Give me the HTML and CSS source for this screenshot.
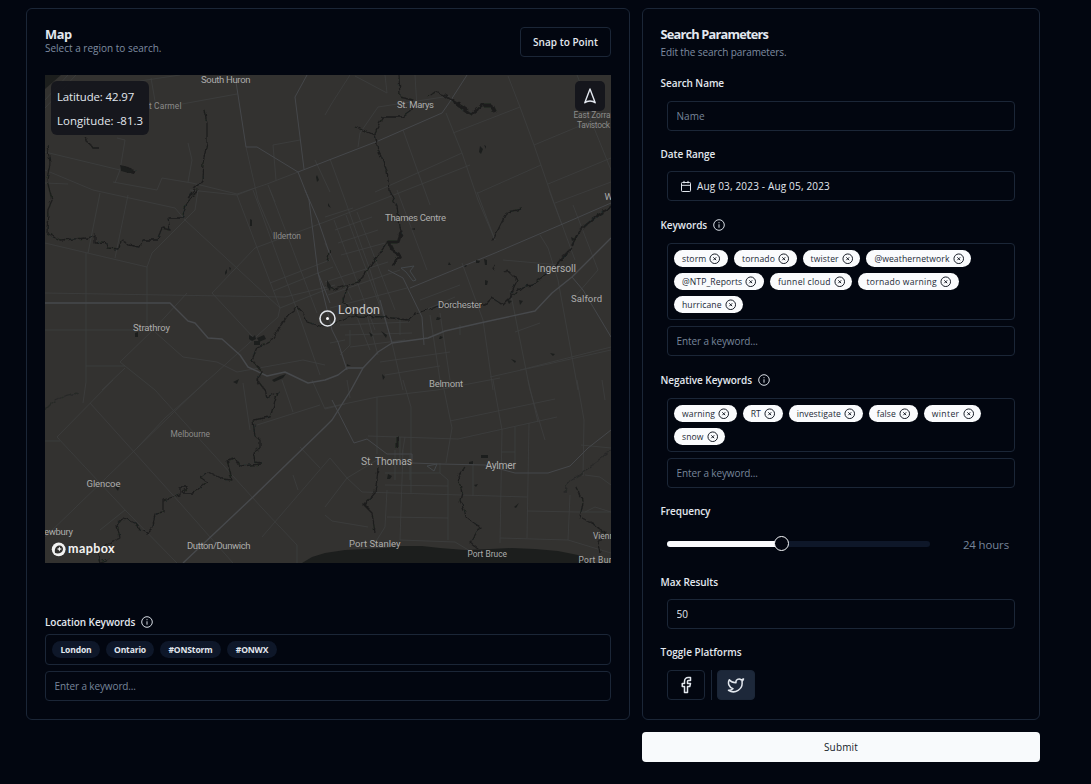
FILE: index.html
```html
<!DOCTYPE html>
<html lang="en">
<head>
<meta charset="utf-8">
<title>Search</title>
<link rel="stylesheet" href="styles.css">
</head>
<body>
<svg class="defs" width="0" height="0" aria-hidden="true">
  <symbol id="i-info" viewBox="0 0 12 12"><circle cx="6" cy="6" r="5.3"/><path d="M6 5.3v3.4M6 3.2v1"/></symbol>
  <symbol id="i-x" viewBox="0 0 24 24"><circle cx="12" cy="12" r="10"/><path d="m15 9-6 6M9 9l6 6"/></symbol>
</svg>
<main class="page">
  <section class="card map-card">
    <header class="map-head">
      <div>
        <h2 class="title title-map">Map</h2>
        <p class="desc">Select a region to search.</p>
      </div>
      <button class="btn snap">Snap to Point</button>
    </header>
    <div class="map">
      <svg class="map-svg" viewBox="45 75 566 488" width="566" height="488">
        <defs>
          <filter id="wiggle" x="-5%" y="-5%" width="110%" height="110%">
            <feTurbulence type="fractalNoise" baseFrequency="0.2" numOctaves="1" seed="4"/>
            <feDisplacementMap in="SourceGraphic" scale="5" xChannelSelector="R" yChannelSelector="G"/>
          </filter>
        </defs>
        <path class="water" d="M45 75H61L45 89Z"/>
        <path class="water" d="M302 563L312 557 325 553 345 550 365 549 385 548 400 546 422 546 440 548 465 550 490 549 512 548 535 549 558 551 578 555 590 563Z"/>
        <g class="road minor">
          <path d="M45 108L76 75M45 100L68 75M151 78L155 101M140 81L180 75M182 104L237 94M45 152L120 170M125 140L120 170 115 183M45 183L68 184M113 182L157 190 162 178 192 183 237 194 267 184 298 172M246 147L258 200 275 240M188 143L192 160 188 182M273 145L300 140M273 145L276 180M125 140L117 138"/>
          <path d="M268 185L275 202M100 193L88 253M128 195L115 258M45 170L93 190 175 208 185 220 280 308 278 317 197 390M45 243L147 267 152 253 195 210 198 190M86 253L86 382 83 403M147 267V325M45 293L285 297 335 285M45 330H140M187 293L155 328 120 362 155 390 262 508 297 545V563M155 332L183 357 217 362 237 372 303 360 325 365M86 366H125M102 390L125 368"/>
          <path d="M255 248L212 293 253 337M255 248L330 220 470 165M237 195L280 308M253 190L300 318 320 375M270 190L317 313M190 190L237 195 255 188M270 283L330 260M273 291L333 267M280 308L330 288M197 390L165 418 137 448 45 537M207 380L137 448M57 437L127 512 177 563M90 403L180 503 233 563M57 437L113 380M45 441H60M243 383L250 430M257 425L320 405M282 380L293 412M100 530L125 510M330 458L262 537M300 447L320 468M312 380L325 409 345 404M293 475L298 490"/>
          <path d="M350 75L332 103 325 115M355 76L387 93 385 75M415 75L417 108M378 107L360 133 358 147M378 107L450 96M508 76L520 107 534 145 553 200 575 260M446 113L462 153 478 200 495 240M453 133L520 107M403 130L418 172 430 205M375 192L462 153M478 193L541 165M534 145L611 113M548 184L611 158M588 113L611 170M577 75L585 95M330 159L345 200 370 270 392 343 403 390M397 190L427 270M477 192L495 240M462 263L483 320 493 390M510 290L530 390 545 440M549 190L562 225M558 280L578 390M540 235L548 248 558 280M555 203L611 182M503 260L560 265M325 217L353 208M330 192L315 160M573 205L598 270 572 300"/>
          <path d="M334 220L375 330M346 215L385 320M357 212L395 310M325 243L352 300M325 282L388 262M328 295L400 270M330 308L407 288M335 230L372 217M338 243L378 230M341 255L385 243M420 300L460 285M425 310L455 297M340 325L410 322M345 335L412 333M350 347L405 340M380 362L450 352M385 375L440 366M357 317L370 350M367 315L378 355M400 320V335M330 343L345 340M340 355L350 345V330M347 370L340 350M430 315L440 380M440 313L450 380M460 325V335M490 377L611 350M515 332L540 323M520 370L611 347"/>
          <path d="M325 408L377 397 437 390 500 378M377 397V454M403 380L411 407V493M442 380L452 428 446 463M493 380L502 430 500 543M528 380L538 422M577 380L584 420 583 476M450 421L555 399M368 436L458 439 557 417M515 427V470M529 423L527 538M502 452H515M325 507L347 478 377 460M330 458L347 478 362 492 527 497M385 485L448 486M448 480V540M387 517L448 518M403 450L400 540 455 542 470 551M387 490L385 527 375 543M473 463V496M527 511L578 512 611 512M570 495L568 540 611 553M500 538L568 540M440 463V473L448 480M385 473H440M325 515L332 521 368 527M395 450V480M400 437V460M405 437L402 455M585 475L600 477 611 485M585 512L595 507 611 512M581 445L611 448M347 380L350 398M602 380L605 400M410 455V480M385 460L412 462"/>
        </g>
        <g class="road mid">
          <path d="M236 82L246 147 257 147 298 172 309 200 318 273 332 330 338 342 347 370"/>
          <path d="M307 75L295 97 304 169M298 172L378 141 442 113 449 103 467 75"/>
          <path d="M305 190L318 220 330 255M318 273L330 303M611 203L572 220 495 253 410 288M388 270L403 278 422 317 424 345M380 300L392 343M572 277L583 290 611 337"/>
          <path d="M332 400L354 443 367 439 387 454H412V463L440 464 485 465 515 473H548L570 466 588 448 611 430"/>
        </g>
        <g class="road major">
          <path d="M45 303H170L188 321 195 323 208 338 222 339 240 355 248 367 267 376 285 372 308 383 325 380 338 375 347 368H363"/>
          <path d="M611 238L572 277 552 293 535 311 480 323 445 331 428 338 392 343 378 352 363 368 351 390 332 420 325 427 253 497 183 563"/>
        </g>
        <path class="town" d="M401 268L414 266 410 271 416 280 413 281 406 272ZM427 466L437 464 434 471Z"/>
        <g class="river" filter="url(#wiggle)">
          <path d="M47 145L50 163 47 180 52 200 48 210 47 233 60 240 87 238 95 235 95 243 105 242 107 248 118 249 122 240 128 245 140 247 143 240 157 240 162 228 170 230 168 218 182 218 187 203 198 190 188 197M188 197L202 180 203 163 207 143 207 123 204 110M85 138L93 148H100"/>
          <path d="M399 75L400 97 412 100V110L403 117H382L375 133 378 150 387 170 389 190 397 207 401 233M355 127L375 135M388 242L368 269 358 282 342 287 333 290 325 285M348 287L343 300 349 310 358 316 385 317 408 320 413 315 435 307 460 304 485 305 492 298 503 305 508 300 522 287 532 285 555 267 572 248"/>
          <path d="M357 315L323 327 307 322 303 313 298 307 288 315 278 330 270 342 257 347 252 360 262 372 257 380 265 390 267 397 278 392 270 417 253 420 255 437 260 440V448L253 452 255 462 262 463M262 464L240 466 235 458 227 460 232 480 222 479 208 472 200 477 207 482 193 493 182 493 187 487 180 487V495L163 500V512L155 513 153 527 147 533 140 530 135 523 123 518 117 525 120 538 110 543 97 550 100 563"/>
          <path d="M505 273L507 270 517 280 510 298M495 265L493 270M493 240L507 212 522 209M378 467L377 480 375 493 364 505 372 513 375 533M465 467L458 477 462 493 460 500 467 518 480 527 470 543 478 549M576 487L583 503 580 517 592 523 605 533 598 543 600 553M330 250L327 262M98 563L110 558"/>
          <path d="M428 97L435 92 444 95 453 101"/>
          <path class="faint" d="M611 450L580 475 567 483 565 493M45 410L55 400 68 395 78 393"/>
        </g>
        <g class="river thick" filter="url(#wiggle)">
          <path d="M452 100L472 114 482 105H492L496 113"/>
          <path d="M401 233L398 242 388 242 392 250 400 255 393 265"/>
          <path d="M122 168L135 172M397 437V447"/>
        </g>
        <g class="river medium" filter="url(#wiggle)">
          <path d="M611 207L598 215 586 225 578 233 572 246M570 250L560 260"/>
        </g>
        <path class="pond" d="M249 335l4 2 2-2 1 4-4 2-3-2zM257 338l7-3 2 4-7 3zM254 341h6v4h-6zM135 333l3-1v5h-3zM115 487l5-2-2 6zM250 219l2 1v6h-2zM225 272l2-3v4l-2 2zM229 267l2 1-1 3zM480 146l3 3-2 5-2-2zM484 145l2 1v3zM484 259l3 1v5h-2zM476 260l4 1-1 2h-3zM485 280l3 1-1 4h-2zM437 317l4 1-2 2h-3zM440 336l3 1-2 2h-2zM369 332l4 3-2 2zM381 331l6 4-1 3zM511 359l5 2-1 2zM550 353l5 1-2 2zM347 364l4 2h-4zM382 374l3 3-2 3zM411 229l4-1v2zM449 262l2 3h-3zM463 266l4-1-1 2zM520 343l3-2zM571 237l4 2-3 2zM481 455h7v3h-7zM469 462l4-1v3h-4zM474 485l4-1-2 3zM514 507l5-4-3 5zM388 474l4 2-2 3h-3zM402 490l2 3zM316 177l1-2 2 5-2 2zM120 165l4 1 5 3 5 1-4 3-9-2zM233 382l6-3-2 5zM272 380l8-4 6-2-3 4-9 4zM507 300l5 1-3 3zM519 300l4 1-3 4zM328 203l3 5-3-2zM327 280l4 6-1 5-3-5z"/>
        <g class="labels">
          <text x="201" y="83" textLength="49.500" class="l9">South Huron</text>
          <text x="149" y="109" textLength="32.500" class="l8 dim">t Carmel</text>
          <text x="397" y="108" textLength="37" class="l9">St. Marys</text>
          <text x="573.500" y="118" textLength="37" class="l8 dim">East Zorra</text>
          <text x="577" y="127.500" textLength="33" class="l8 dim">Tavistock</text>
          <text x="604.500" y="200" class="l9">W</text>
          <text x="385" y="221" textLength="61" class="l9">Thames Centre</text>
          <text x="273" y="239" textLength="28" class="l8 dim">Ilderton</text>
          <text x="537" y="272" textLength="39" class="l10">Ingersoll</text>
          <text x="571" y="302" textLength="31" class="l9">Salford</text>
          <text x="438" y="308" textLength="44" class="l9">Dorchester</text>
          <text x="338" y="313.500" textLength="42" class="l12">London</text>
          <text x="133" y="331" textLength="37" class="l9">Strathroy</text>
          <text x="429" y="387" textLength="34" class="l9">Belmont</text>
          <text x="170.500" y="436.500" textLength="39.500" class="l8 dim">Melbourne</text>
          <text x="361" y="465" textLength="51" class="l10">St. Thomas</text>
          <text x="485.500" y="469" textLength="30.500" class="l10">Aylmer</text>
          <text x="86.500" y="487" textLength="34" class="l9">Glencoe</text>
          <text x="44" y="535" textLength="29" class="l9">ewbury</text>
          <text x="187" y="548.500" textLength="63.500" class="l9">Dutton/Dunwich</text>
          <text x="349" y="547" textLength="51.500" class="l9">Port Stanley</text>
          <text x="467.500" y="557" textLength="39.500" class="l8">Port Bruce</text>
          <text x="593" y="538.500" class="l8">Vienn</text>
          <text x="578.500" y="562.500" textLength="33" class="l8">Port Bur</text>
        </g>
        <g class="marker"><circle cx="327.500" cy="318.500" r="7.500"/><circle class="dot" cx="327.500" cy="318.500" r="1.500"/></g>
        <g class="mapbox">
          <circle cx="58.700" cy="549.300" r="6.900"/>
          <path class="cut" d="M55.100 553.100c-.8-3 .2-7.200 4-7.600 2.500-.2 4.200 1.700 3.900 4-.4 3.300-4.600 4.600-7.900 3.600z"/>
          <path d="M59.400 546.400l.8 1.800 1.800.8-1.800.8-.8 1.800-.8-1.800-1.800-.8 1.800-.8z"/>
          <text x="68" y="553" textLength="46.500">mapbox</text>
        </g>
      </svg>
      <div class="coords"><p class="lat">Latitude: 42.97</p><p class="lng">Longitude: -81.3</p></div>
      <button class="compass" aria-label="Reset north"><svg width="30" height="30" viewBox="0 0 30 30"><path d="M15 8L20.200 21.800C17.500 19.300 12.500 19.300 9.800 21.800Z"/></svg></button>
    </div>
    <div class="loc">
      <div class="label"><span class="t-loc">Location Keywords</span><svg class="info"><use href="#i-info"/></svg></div>
      <div class="box tags"><span class="tag w48">London</span><span class="tag w48">Ontario</span><span class="tag w61">#ONStorm</span><span class="tag w50">#ONWX</span></div>
      <input class="input" placeholder="Enter a keyword...">
    </div>
  </section>
  <div class="side">
    <section class="card form">
      <h2 class="title title-search">Search Parameters</h2>
      <p class="desc desc-search">Edit the search parameters.</p>
      <div class="group">
        <div class="label">Search Name</div>
        <div class="field"><input class="input name" placeholder="Name"></div>
      </div>
      <div class="group tight">
        <div class="label">Date Range</div>
        <div class="field"><button class="btn date"><svg width="12" height="13" viewBox="0 0 12 13"><rect x="1.500" y="2.500" width="9" height="9" rx=".8"/><path d="M1.500 5.300h9M4 .9v2.400M8 .9v2.400"/></svg>Aug 03, 2023 - Aug 05, 2023</button></div>
      </div>
      <div class="group">
        <div class="label">Keywords<svg class="info"><use href="#i-info"/></svg></div>
        <div class="field">
          <div class="box chips">
            <span class="chip">storm<svg><use href="#i-x"/></svg></span><span class="chip">tornado<svg><use href="#i-x"/></svg></span><span class="chip">twister<svg><use href="#i-x"/></svg></span><span class="chip">@weathernetwork<svg><use href="#i-x"/></svg></span><span class="chip">@NTP_Reports<svg><use href="#i-x"/></svg></span><span class="chip wide">funnel cloud<svg><use href="#i-x"/></svg></span><span class="chip wide">tornado warning<svg><use href="#i-x"/></svg></span><span class="chip">hurricane<svg><use href="#i-x"/></svg></span>
          </div>
          <input class="input" placeholder="Enter a keyword...">
        </div>
      </div>
      <div class="group short">
        <div class="label">Negative Keywords<svg class="info"><use href="#i-info"/></svg></div>
        <div class="field">
          <div class="box chips">
            <span class="chip">warning<svg><use href="#i-x"/></svg></span><span class="chip">RT<svg><use href="#i-x"/></svg></span><span class="chip">investigate<svg><use href="#i-x"/></svg></span><span class="chip">false<svg><use href="#i-x"/></svg></span><span class="chip wider">winter<svg><use href="#i-x"/></svg></span><span class="chip">snow<svg><use href="#i-x"/></svg></span>
          </div>
          <input class="input" placeholder="Enter a keyword...">
        </div>
      </div>
      <div class="group">
        <div class="label">Frequency</div>
        <div class="field freq">
          <div class="slider"><div class="fill"></div><div class="thumb"></div></div>
          <span class="hours">24 hours</span>
        </div>
      </div>
      <div class="group tight short">
        <div class="label">Max Results</div>
        <div class="field"><input class="input" value="50"></div>
      </div>
      <div class="group last">
        <div class="label t-toggle">Toggle Platforms</div>
        <div class="field platforms">
          <button class="toggle" aria-label="Facebook"><svg viewBox="0 0 24 24"><path d="M18 2h-3a5 5 0 0 0-5 5v3H7v4h3v8h4v-8h3l1-4h-4V7a1 1 0 0 1 1-1h3z"/></svg></button>
          <div class="sep"></div>
          <button class="toggle on" aria-label="Twitter"><svg viewBox="0 0 24 24"><path d="M22 4s-.7 2.100-2 3.400c1.600 10-9.400 17.300-18 11.600 2.200.1 4.400-.6 6-2C3 15.500.5 9.600 3 5c2.200 2.600 5.600 4.100 9 4-.9-4.200 4-6.600 7-3.800 1.100 0 3-1.200 3-1.200z"/></svg></button>
        </div>
      </div>
    </section>
    <button class="submit">Submit</button>
  </div>
</main>
</body>
</html>
```
FILE: styles.css
```css
*{box-sizing:border-box;margin:0}
body{background:#020610;color:#e3e8ef;font:400 10px/14px "Open Sans","Noto Sans",sans-serif}
button,input{font:inherit;color:inherit;background:none;border:0;outline:0}
svg{flex:none;fill:none;stroke:currentColor}
.defs{position:absolute}
.page{display:flex;gap:12px;padding:8px 0 0 26px}
.card{border:1px solid #1b2637;border-radius:6px;padding:18px;height:712px}
.map-card{width:604px}
.side{width:398px}
.form{padding-left:17.500px}
.title{font-size:12.800px;line-height:14px;font-weight:700}
.title-map{letter-spacing:-.35px}
.title-search{letter-spacing:-.8px}
.desc{color:#7f8ca0;line-height:14px}
.desc-search{letter-spacing:-.1px;margin-top:4px}
.map-head{display:flex;justify-content:space-between;height:48px}
.btn{border:1px solid #1b2637;border-radius:4px;height:30px}
.snap{width:91px;font-weight:600;letter-spacing:.03px;padding:0}
.map{position:relative;width:566px;height:488px;background:#333230;overflow:hidden}
.map-svg{display:block}
.map-svg .road{stroke-linejoin:round}
.map-svg .minor{stroke:#3e3f3f;stroke-width:.8}
.map-svg .mid{stroke:#45474a;stroke-width:1}
.map-svg .major{stroke:#47494c;stroke-width:1.400}
.water,.pond{fill:#1c1e1d;stroke:none}
.town{fill:none;stroke:#43474a}
.river{stroke:#1c1e1d;stroke-width:1.300;stroke-linejoin:round}
.river .faint{stroke:#282928}
.river.thick{stroke-width:3}
.river.medium{stroke-width:2}
.labels text{font-family:Roboto,sans-serif;font-weight:400;fill:#adadac;stroke:none}
.labels text.dim{fill:#8b8b8a}
.labels .l8{font-size:8.400px}
.labels .l9{font-size:9.500px}
.labels .l10{font-size:10.300px}
.labels text.l12{font-size:12.500px;fill:#c8c8c7}
.marker circle{stroke:#dfe3e8;stroke-width:1.600}
.marker .dot{fill:#fff;stroke:none}
.mapbox{fill:#f3f3f2;stroke:none}
.mapbox .cut{fill:#333230}
.mapbox text{font:700 12.500px Lato,sans-serif}
.coords{position:absolute;left:6px;top:6px;width:98px;height:54px;padding:4px 6px;border-radius:6px;background:#15161cf2;font-size:11.400px;line-height:24px;white-space:nowrap}
.coords p{height:24px}
.lat{letter-spacing:-.1px}
.lng{letter-spacing:.04px}
.compass{position:absolute;right:6px;top:6px;width:30px;height:30px;border-radius:5px;background:#15161c;padding:0}
.compass path{stroke-width:1.400;stroke-linejoin:round}
.loc{padding-top:52px}
.label{display:flex;align-items:center;height:14px;font-weight:600;letter-spacing:-.06px;white-space:nowrap}
.t-toggle{letter-spacing:0}
.info{width:12px;height:12px;margin-left:6px;stroke-width:.95}
.box{border:1px solid #1b2637;border-radius:4px;padding:6px;display:flex;flex-wrap:wrap;gap:6px}
.loc .box{height:31px;margin-top:5px}
.input{display:block;width:100%;height:30px;border:1px solid #1b2637;border-radius:4px;padding:0 8.600px;letter-spacing:-.12px}
.name{letter-spacing:0}
.input::placeholder{color:#77859a;opacity:1}
.box + .input{margin-top:6px}
.tag{height:17px;border-radius:9px;background:#0e1729;font-size:8.550px;line-height:18px;font-weight:700;letter-spacing:-.16px;text-align:center}
.w48{width:48px}.w50{width:50px}.w61{width:61px}
.group{margin-bottom:16px}
.group .label{margin-bottom:11px}
.group.tight .label{margin-bottom:10px}
.desc + .group{margin-top:17px}
.group.tight{margin-bottom:17px}
.group:has(.chips){margin-bottom:17px}
.group.short{margin-bottom:16px}
.field{padding:0 6px 0 6.500px}
.date{display:flex;align-items:center;gap:5px;width:100%;padding:0 12px;letter-spacing:.17px}
.chip{display:flex;align-items:center;height:17px;border-radius:9px;background:#fafbfd;color:#222936;font-size:8.600px;line-height:15px;letter-spacing:.1px;padding:2px 7px 0 8px}
.chip.wide{letter-spacing:.24px}
.chip.wider{letter-spacing:.4px}
.chip svg{width:11.500px;height:11.500px;margin:-2px 0 0 3.200px;stroke:#10151f;stroke-width:2}
.freq{display:flex;align-items:center;justify-content:space-between;height:30px}
.slider{position:relative;width:263px;height:6px;border-radius:3px;background:#0e1729}
.fill{width:114px;height:6px;border-radius:3px;background:#fafbfd}
.thumb{position:absolute;left:106.500px;top:-5px;width:15px;height:15px;border-radius:50%;border:1px solid #fafbfd;background:#02050f}
.hours{font-size:11.400px;letter-spacing:-.1px;color:#77859a;padding:2px 6px 0 0}
.platforms{display:flex;align-items:center;gap:6px}
.toggle{display:flex;align-items:center;justify-content:center;width:38px;height:30px;padding:0;border:1px solid #1b2637;border-radius:4px}
.toggle svg{width:18px;height:18px;stroke-width:2;stroke-linejoin:round;stroke-linecap:round}
.toggle.on{background:#1d283a}
.sep{width:1px;height:30px;background:#1b2637;margin-right:-1px}
.submit{display:block;width:398px;height:30px;margin-top:12px;border-radius:4px;background:#f8fafc;color:#151b28;letter-spacing:.17px}
```
